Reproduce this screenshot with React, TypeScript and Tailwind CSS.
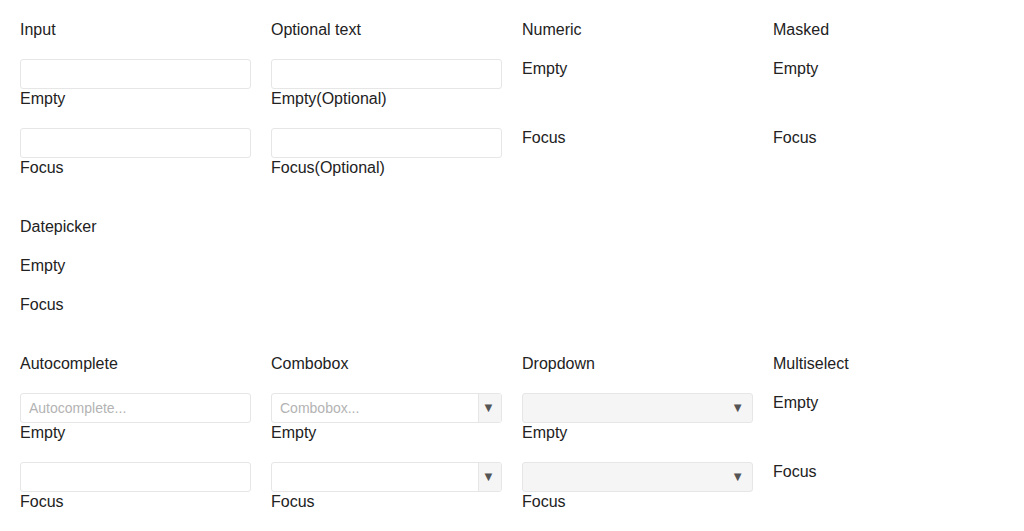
import React from "react";

const font = { fontFamily: '"Liberation Sans", Arial, sans-serif' };

function Label({ children }: { children: React.ReactNode }) {
  return <div className="text-base leading-[19px] text-[#222]">{children}</div>;
}

function TextBox({ placeholder }: { placeholder?: string }) {
  return (
    <div className="h-[30px] w-full rounded-[3px] border border-[#e6e6e6] bg-white px-2 flex items-center text-sm text-[#b3b3b3]">
      {placeholder}
    </div>
  );
}

function ComboBox({ placeholder }: { placeholder?: string }) {
  return (
    <div className="h-[30px] w-full rounded-[3px] border border-[#e6e6e6] bg-white flex overflow-hidden">
      <div className="flex-1 px-2 flex items-center text-sm text-[#b3b3b3]">{placeholder}</div>
      <div className="w-[23px] border-l border-[#e6e6e6] bg-[#f5f5f5] flex items-center justify-center pr-[3px] text-[13px] text-[#555]">
        ▼
      </div>
    </div>
  );
}

function DropDown() {
  return (
    <div className="h-[30px] w-full rounded-[3px] border border-[#e6e6e6] bg-[#f5f5f5] flex items-center justify-end pr-[8px] text-[13px] text-[#555]">
      ▼
    </div>
  );
}

type Item = { label: string; control?: React.ReactNode; spacer?: boolean };

function Section({ title, items }: { title: string; items: Item[] }) {
  return (
    <div className="flex flex-col gap-5">
      <Label>{title}</Label>
      {items.map((it) => (
        <div key={it.label} className="flex flex-col">
          {it.control}
          <Label>{it.label}</Label>
          {it.spacer && <div className="h-[30px]" />}
        </div>
      ))}
    </div>
  );
}

export default function App() {
  return (
    <div className="min-h-screen bg-white p-5" style={font}>
      <div className="grid grid-cols-4 gap-x-5 gap-y-10">
        <Section
          title="Input"
          items={[
            { label: "Empty", control: <TextBox /> },
            { label: "Focus", control: <TextBox /> },
          ]}
        />
        <Section
          title="Optional text"
          items={[
            { label: "Empty(Optional)", control: <TextBox /> },
            { label: "Focus(Optional)", control: <TextBox /> },
          ]}
        />
        <Section
          title="Numeric"
          items={[
            { label: "Empty", spacer: true },
            { label: "Focus", spacer: true },
          ]}
        />
        <Section
          title="Masked"
          items={[
            { label: "Empty", spacer: true },
            { label: "Focus", spacer: true },
          ]}
        />

        <Section title="Datepicker" items={[{ label: "Empty" }, { label: "Focus" }]} />
        <div />
        <div />
        <div />

        <Section
          title="Autocomplete"
          items={[
            { label: "Empty", control: <TextBox placeholder="Autocomplete..." /> },
            { label: "Focus", control: <TextBox /> },
          ]}
        />
        <Section
          title="Combobox"
          items={[
            { label: "Empty", control: <ComboBox placeholder="Combobox..." /> },
            { label: "Focus", control: <ComboBox /> },
          ]}
        />
        <Section
          title="Dropdown"
          items={[
            { label: "Empty", control: <DropDown /> },
            { label: "Focus", control: <DropDown /> },
          ]}
        />
        <Section
          title="Multiselect"
          items={[
            { label: "Empty", spacer: true },
            { label: "Focus", spacer: true },
          ]}
        />
      </div>
    </div>
  );
}
